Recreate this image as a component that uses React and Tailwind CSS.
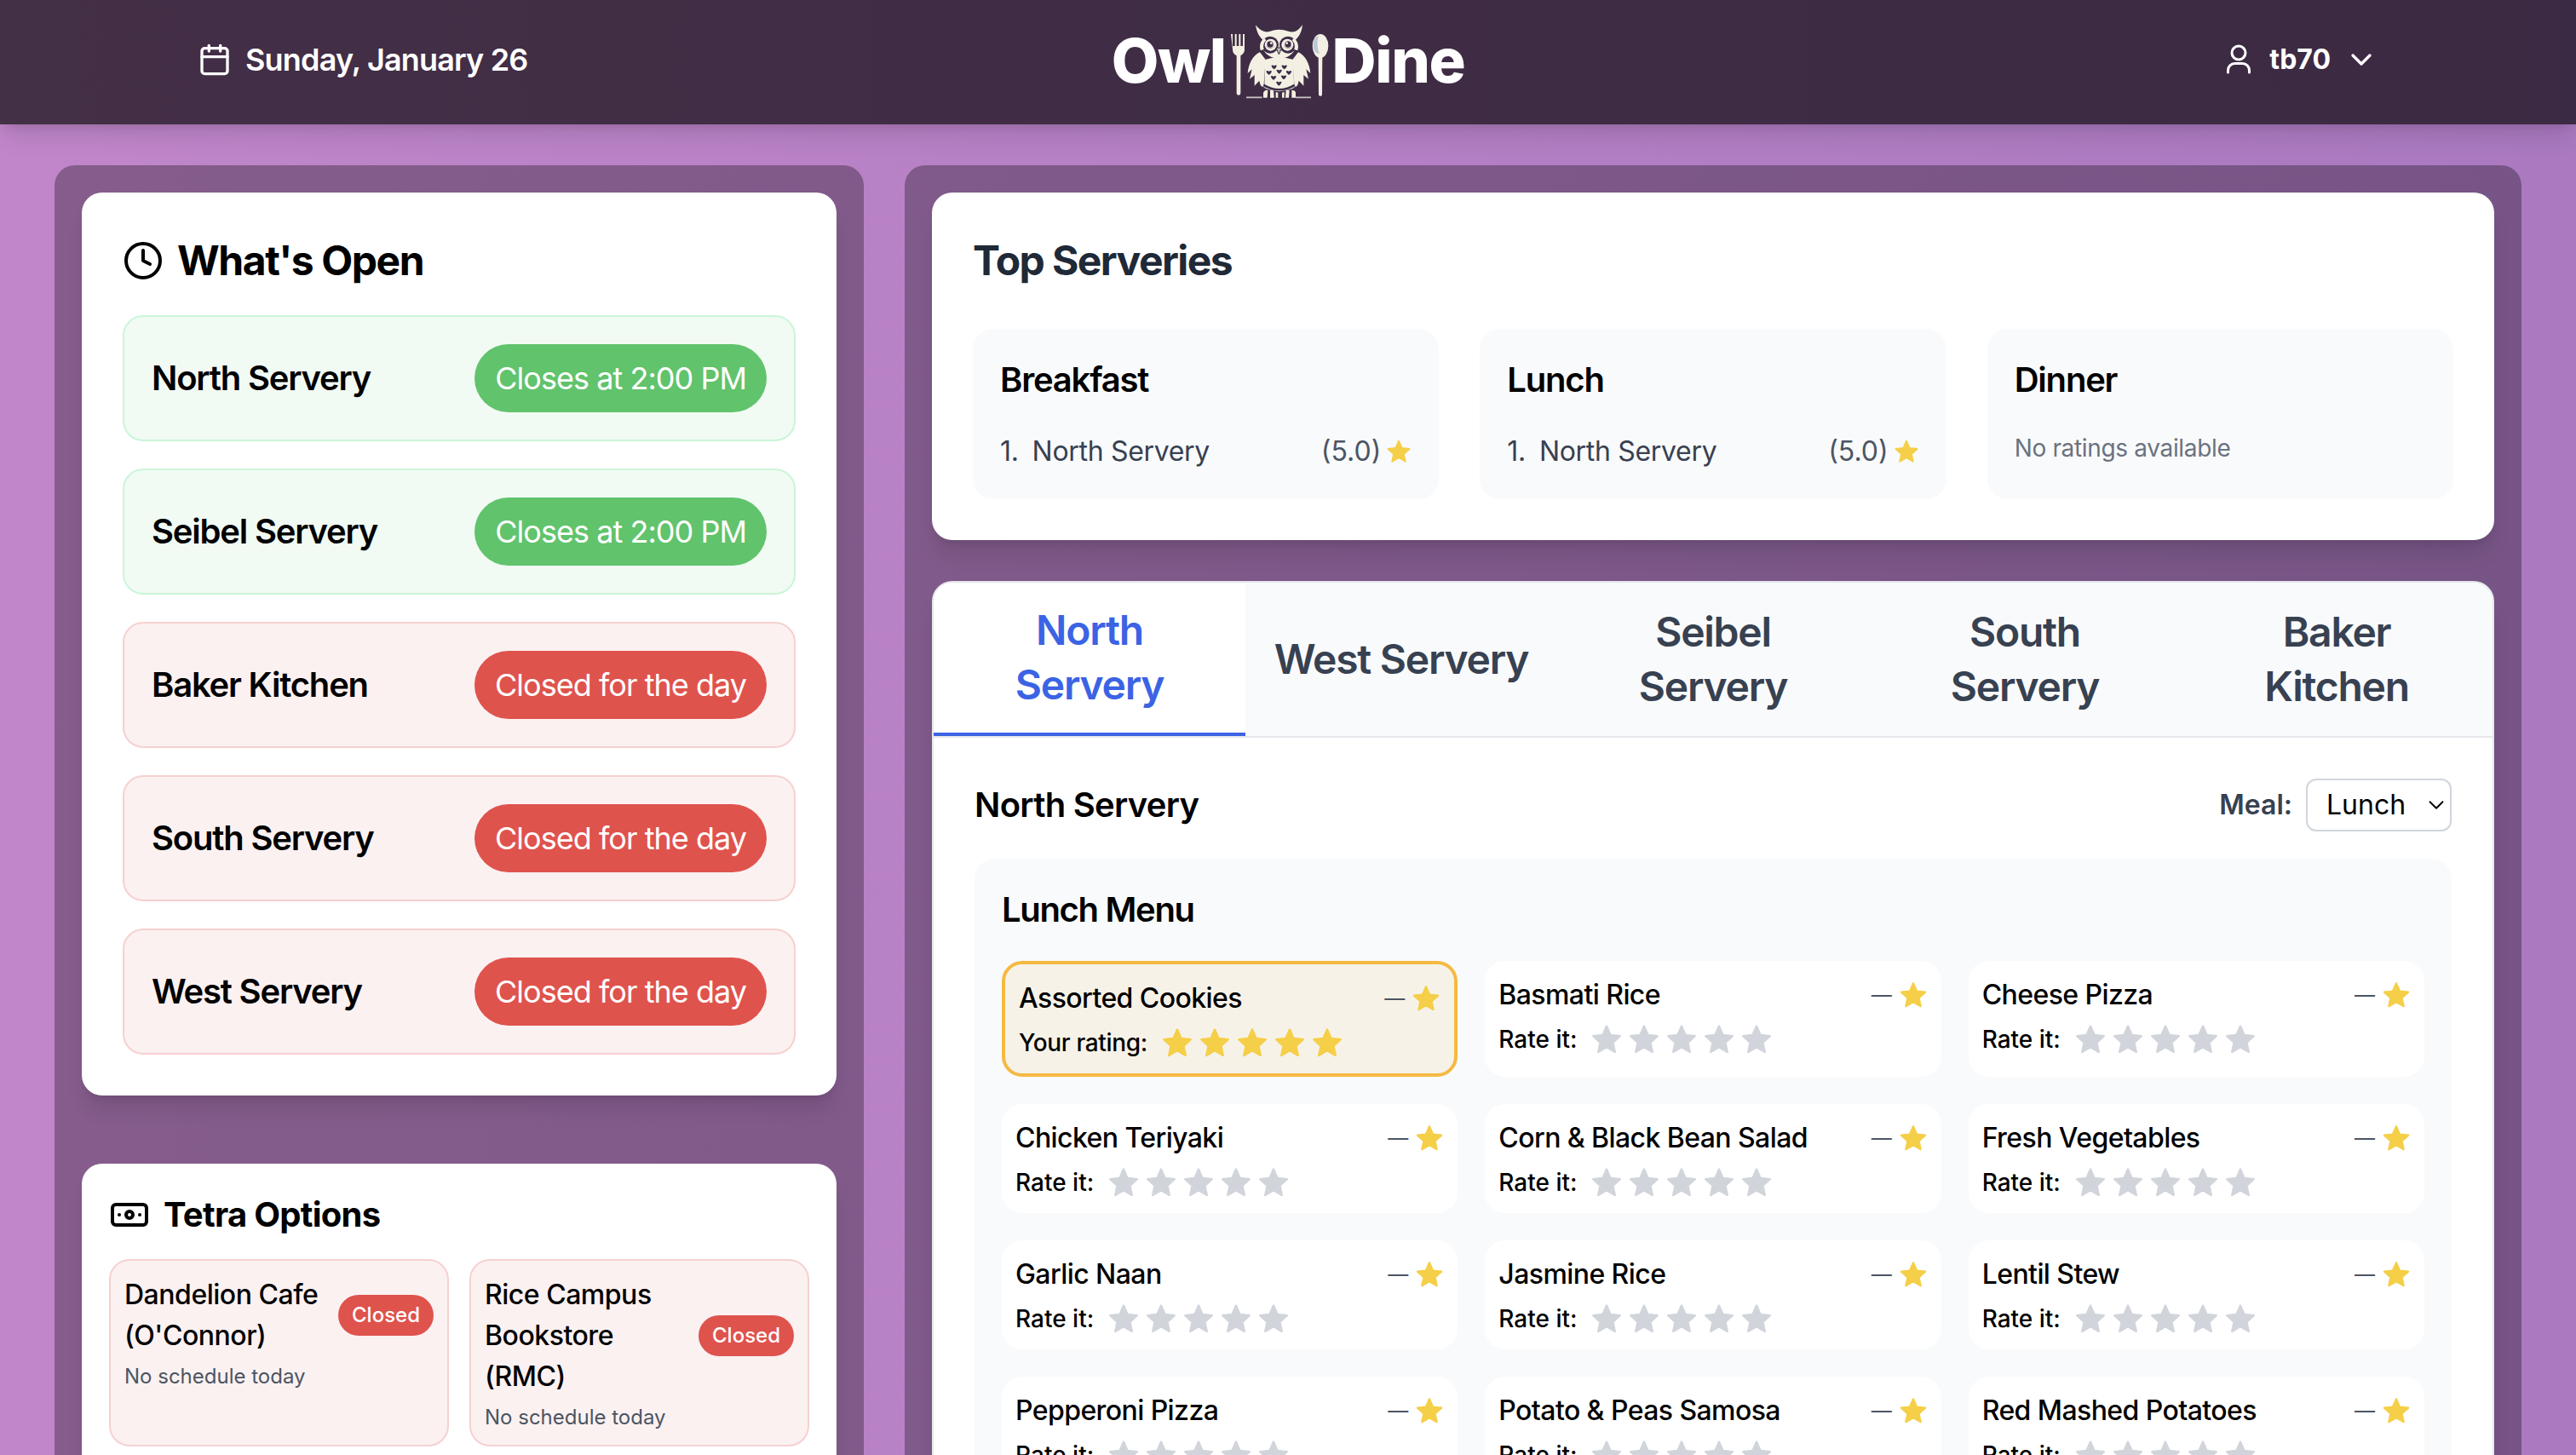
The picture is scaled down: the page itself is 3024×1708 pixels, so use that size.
import React from 'react';
import { Banknote, Calendar, ChevronDown, Clock } from 'lucide-react';

const HOURS = [
  { name: 'North Servery', status: 'Closes at 2:00 PM', open: true },
  { name: 'Seibel Servery', status: 'Closes at 2:00 PM', open: true },
  { name: 'Baker Kitchen', status: 'Closed for the day', open: false },
  { name: 'South Servery', status: 'Closed for the day', open: false },
  { name: 'West Servery', status: 'Closed for the day', open: false },
];

const TABS = ['North Servery', 'West Servery', 'Seibel Servery', 'South Servery', 'Baker Kitchen'];

const MENU = [
  'Basmati Rice',
  'Cheese Pizza',
  'Chicken Teriyaki',
  'Corn & Black Bean Salad',
  'Fresh Vegetables',
  'Garlic Naan',
  'Jasmine Rice',
  'Lentil Stew',
  'Pepperoni Pizza',
  'Potato & Peas Samosa',
  'Red Mashed Potatoes',
];

const Star = ({ className }) => (
  <svg className={className} viewBox="0 0 24 24" fill="currentColor" stroke="currentColor" strokeWidth="1.5" strokeLinejoin="round">
    <polygon points="12,2.2 14.9,8.8 22,9.6 16.7,14.4 18.2,21.4 12,17.8 5.8,21.4 7.3,14.4 2,9.6 9.1,8.8" />
  </svg>
);

const Stars = ({ filled }) => (
  <div className="flex gap-[6px]">
    {[0, 1, 2, 3, 4].map((i) => (
      <Star key={i} className={`w-[38px] h-[38px] ${filled ? 'text-[#f5cf48]' : 'text-[#d1d5db]'}`} />
    ))}
  </div>
);

const UserIcon = () => (
  <svg className="w-[30px] h-[36px] text-white" viewBox="0 0 30 36" fill="none" stroke="currentColor" strokeWidth="3" strokeLinecap="round">
    <circle cx="15" cy="10" r="8" />
    <path d="M2.5 33v-2.5a8 8 0 0 1 8-8h9a8 8 0 0 1 8 8V33" />
  </svg>
);

const Heart = ({ x, y }) => (
  <path transform={`translate(${x} ${y})`} d="M-10 -5Q-5 -9 0 -4Q5 -9 10 -5Q7 4 0 8Q-7 4 -10 -5Z" fill="#3f2d48" />
);

const Wing = () => (
  <path d="M120 124C96 134 80 164 77 198L92 184L84 218L101 204L101 242L118 224C122 246 130 252 134 236L140 150Z" />
);

const LogoMark = () => (
  <svg className="w-[125px] h-[100px] shrink-0" viewBox="0 0 375 300">
    <g fill="#f3f0e3">
      {/* fork */}
      <path d="M18 60h6v42h8V60h6v42h8V60h6v42h8V60h6v54c0 12-8 18-14 22v132c0 10-14 10-14 0V136c-7-4-14-10-14-22Z" />
      {/* spoon */}
      <ellipse cx="333" cy="102" rx="28" ry="42" />
      <path d="M326 130h14l-1 142c0 8-12 8-12 0Z" />
      {/* owl */}
      <path d="M105 28C122 50 140 56 156 50C176 42 200 42 220 50C238 56 254 50 270 28C268 54 256 70 246 80C252 112 236 136 206 144H170C140 136 122 112 130 80C118 70 108 52 105 28Z" />
      <Wing />
      <g transform="translate(375 0) scale(-1 1)">
        <Wing />
      </g>
      <path d="M138 150Q187 134 238 150L240 236Q188 268 136 236Z" />
      <path d="M132 266q6-12 16-8l-2 26h-14ZM156 258h12l2 26h-14ZM176 264l8 2v18h-8ZM198 266l8-2v20h-8ZM212 258h12l-2 26h-12ZM232 258q12-2 14 8l0 18h-14Z" />
    </g>
    <path d="M308 100c0-22 10-32 18-34c-4 16-6 44 4 62c-12 2-22-10-22-28Z" fill="#b9c8d6" />
    <path d="M120 236Q188 282 256 236L236 252Q188 272 140 252Z" fill="#c6cbc7" />
    <path d="M72 283h56M246 283h54" stroke="#c9c6c6" strokeWidth="5" />
    {/* face */}
    <circle cx="156" cy="98" r="30" fill="#3f2d48" />
    <circle cx="219" cy="98" r="30" fill="#3f2d48" />
    <path d="M122 118q-8-28 14-44l6 8q-14 14-8 32ZM253 118q8-28-14-44l-6 8q14 14 8 32Z" fill="#f3f0e3" />
    <circle cx="158" cy="98" r="21" fill="#f3f0e3" />
    <circle cx="217" cy="98" r="21" fill="#f3f0e3" />
    <path d="M142 100a15 15 0 0 0 28 0a13 10 0 0 1-28 0ZM233 100a15 15 0 0 1-28 0a13 10 0 0 0 28 0Z" fill="#3f2d48" />
    <circle cx="156" cy="96" r="11" fill="#3f2d48" />
    <circle cx="219" cy="96" r="11" fill="#3f2d48" />
    <circle cx="160" cy="92" r="4" fill="#f3f0e3" />
    <circle cx="215" cy="92" r="4" fill="#f3f0e3" />
    <path d="M177 108h20l-10 24Z" fill="#b9b9ad" stroke="#3f2d48" strokeWidth="3" />
    <Heart x={170} y={176} />
    <Heart x={206} y={176} />
    <Heart x={152} y={196} />
    <Heart x={188} y={192} />
    <Heart x={222} y={196} />
    <Heart x={168} y={214} />
    <Heart x={204} y={212} />
    <Heart x={187} y={234} />
  </svg>
);

const Header = () => (
  <header className="grid grid-cols-3 items-center h-[146px] px-[232px] pb-[6px] bg-black/65 shadow-xl text-white">
    <div className="flex items-center gap-4">
      <Calendar size={40} />
      <span className="text-4xl font-semibold tracking-[-0.023em]">Sunday, January 26</span>
    </div>
    <div className="flex items-center justify-center">
      <span className="mt-[2px] text-[72px] leading-none font-extrabold tracking-[-0.02em]">Owl</span>
      <LogoMark />
      <span className="mt-[2px] text-[72px] leading-none font-extrabold tracking-[-0.02em]">Dine</span>
    </div>
    <div className="flex items-center justify-end">
      <UserIcon />
      <span className="ml-[21px] text-[32px] font-bold">tb70</span>
      <ChevronDown size={40} className="ml-4" />
    </div>
  </header>
);

const WhatsOpen = () => (
  <section className="bg-white rounded-3xl shadow-xl p-12">
    <h2 className="flex items-center gap-4 text-5xl leading-[64px] font-bold tracking-[-0.03em] text-black mb-8">
      <Clock size={48} />
      What's Open
    </h2>
    <div className="flex flex-col gap-8">
      {HOURS.map((item) => (
        <div
          key={item.name}
          className={`flex items-center justify-between p-8 rounded-3xl border-2 ${
            item.open ? 'bg-[#f1fbf4] border-[#cbf5d8]' : 'bg-[#fbf1f1] border-[#f7d0d0]'
          }`}
        >
          <span className="text-[40px] font-semibold tracking-[-0.03em] text-black">{item.name}</span>
          <span
            className={`px-6 py-3 rounded-full text-4xl leading-[56px] tracking-[-0.027em] text-white ${
              item.open ? 'bg-[#61c36c]' : 'bg-[#df534d]'
            }`}
          >
            {item.status}
          </span>
        </div>
      ))}
    </div>
  </section>
);

const TetraCard = ({ name }) => (
  <div className="p-4 rounded-3xl border-2 bg-[#fbf1f1] border-[#f7d0d0]">
    <div className="flex items-center justify-between gap-4">
      <span className="text-[32px] leading-[48px] font-medium tracking-[-0.015em] text-black">{name}</span>
      <span className="px-4 py-2 rounded-full bg-[#df534d] text-white text-2xl font-medium">Closed</span>
    </div>
    <p className="mt-2 text-2xl text-[#4b5563]">No schedule today</p>
  </div>
);

const TetraOptions = () => (
  <section className="flex-1 bg-white rounded-3xl shadow-xl p-8">
    <h2 className="flex items-center gap-4 text-[40px] leading-[56px] font-bold tracking-[-0.018em] text-black mb-6">
      <Banknote size={48} />
      Tetra Options
    </h2>
    <div className="grid grid-cols-2 gap-6">
      <TetraCard name="Dandelion Cafe (O'Connor)" />
      <TetraCard name="Rice Campus Bookstore (RMC)" />
    </div>
  </section>
);

const MealRanking = ({ title, empty }) => (
  <div className="p-8 rounded-3xl bg-[#f9fafb]">
    <h3 className="text-[40px] leading-[56px] font-semibold tracking-[-0.03em] text-black mb-8">{title}</h3>
    {empty ? (
      <p className="text-[28px] leading-[40px] tracking-[-0.012em] text-[#6b7280]">No ratings available</p>
    ) : (
      <div className="flex items-center justify-between text-[32px] leading-[48px]">
        <span className="text-[#374151] tracking-[-0.01em]">
          <span className="mr-4">1.</span>
          North Servery
        </span>
        <span className="flex items-center gap-[6px] text-[#4b5563]">
          (5.0)
          <Star className="w-[30px] h-[30px] text-[#f5cf48]" />
        </span>
      </div>
    )}
  </div>
);

const TopServeries = () => (
  <section className="bg-white rounded-3xl shadow-xl p-12">
    <h2 className="text-5xl leading-[64px] font-bold tracking-[-0.033em] text-[#1f2937] mb-12">Top Serveries</h2>
    <div className="grid grid-cols-3 gap-12">
      <MealRanking title="Breakfast" />
      <MealRanking title="Lunch" />
      <MealRanking title="Dinner" empty />
    </div>
  </section>
);

const Tabs = () => (
  <div className="flex bg-[#f9fafb] border-b-2 border-[#e5e7eb]">
    {TABS.map((tab, i) => (
      <div
        key={tab}
        className={`flex-1 flex items-center justify-center text-center px-2 py-6 text-5xl leading-[64px] font-semibold tracking-[-0.026em] ${
          i === 0 ? 'bg-white text-[#3b63e4] border-b-4 border-[#3b63e4]' : 'text-[#374151]'
        }`}
      >
        <span className={i === 1 ? 'whitespace-nowrap' : 'w-[240px]'}>{tab}</span>
      </div>
    ))}
  </div>
);

const RatingMark = () => (
  <span className="flex items-center gap-2 text-[24px] text-[#4b5563]">
    —
    <Star className="w-[34px] h-[34px] text-[#f5cf48]" />
  </span>
);

const SelectedItem = () => (
  <div className="p-4 rounded-3xl border-4 border-[#f5b942] bg-[#f7f2e8]">
    <div className="flex items-center justify-between">
      <span className="text-[32px] leading-[48px] font-medium tracking-[-0.018em] text-black">Assorted Cookies</span>
      <RatingMark />
    </div>
    <div className="flex items-center gap-4 mt-2 h-10">
      <span className="text-[28px] leading-[40px] font-medium tracking-[-0.012em] text-black">Your rating:</span>
      <Stars filled />
    </div>
  </div>
);

const MenuItem = ({ name }) => (
  <div className="p-4 rounded-3xl bg-white">
    <div className="flex items-center justify-between">
      <span className="text-[32px] leading-[48px] font-medium tracking-[-0.018em] text-black">{name}</span>
      <RatingMark />
    </div>
    <div className="flex items-center gap-4 mt-2 h-10">
      <span className="text-[28px] leading-[40px] font-medium text-black">Rate it:</span>
      <Stars />
    </div>
  </div>
);

const MenuPanel = () => (
  <section className="bg-white rounded-3xl border-2 border-[#e5e7eb] shadow-xl overflow-hidden">
    <Tabs />
    <div className="p-12">
      <div className="flex items-center justify-between mb-8">
        <h2 className="text-[40px] font-semibold tracking-[-0.018em] text-black">North Servery</h2>
        <div className="flex items-center gap-4">
          <span className="text-[32px] font-semibold text-[#374151]">Meal:</span>
          <div className="relative">
            <select className="appearance-none w-[171px] h-[62px] pl-[22px] rounded-xl border-2 border-[#d1d5db] bg-white text-[32px] text-black">
              <option>Lunch</option>
            </select>
            <ChevronDown size={30} strokeWidth={1.5} className="absolute right-[3px] top-[16px] text-black pointer-events-none" />
          </div>
        </div>
      </div>
      <div className="p-8 rounded-3xl bg-[#f9fafb]">
        <h3 className="text-[40px] leading-[56px] font-semibold tracking-[-0.033em] text-black mb-8">Lunch Menu</h3>
        <div className="grid grid-cols-3 gap-8">
          <SelectedItem />
          {MENU.map((name) => (
            <MenuItem key={name} name={name} />
          ))}
        </div>
      </div>
    </div>
  </section>
);

const App = () => (
  <div className="h-[1708px] overflow-hidden bg-linear-to-r from-[#c086c9] to-[#aa79c0] font-['Inter',sans-serif]">
    <Header />
    <main className="grid grid-cols-[950px_minmax(0,1fr)] gap-12 px-16 py-12">
      <div className="flex flex-col gap-20 p-8 rounded-3xl bg-black/30">
        <WhatsOpen />
        <TetraOptions />
      </div>
      <div className="flex flex-col gap-12 p-8 rounded-3xl bg-black/30">
        <TopServeries />
        <MenuPanel />
      </div>
    </main>
  </div>
);

export default App;
